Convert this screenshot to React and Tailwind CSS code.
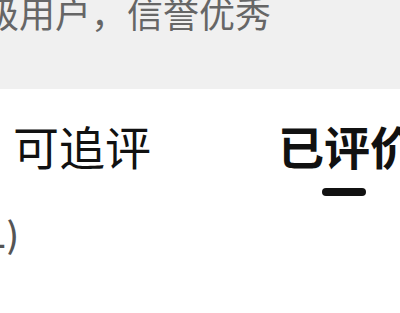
import React from 'react'

const tabs = [
  { label: '可追评', active: false },
  { label: '已评价', active: true },
]

export default function App() {
  return (
    <div
      className="w-[400px] h-[313px] overflow-hidden bg-white"
      style={{ fontFamily: '"Noto Sans CJK SC", "Noto Sans", sans-serif' }}
    >
      {/* seller credit banner */}
      <div className="h-[89px] bg-[#f0f0f0] overflow-hidden">
        <p className="-ml-[17px] -mt-[6px] whitespace-nowrap text-[36px] leading-[36px] text-[#666666]">
          级用户，信誉优秀
        </p>
      </div>

      {/* tabs */}
      <div className="flex items-start gap-[127px] pl-[13px] pt-[33px] whitespace-nowrap">
        {tabs.map((tab) => (
          <div key={tab.label} className="flex flex-col items-start">
            <span
              className={
                tab.active
                  ? 'text-[46px] leading-[46px] font-bold text-[#111111]'
                  : 'text-[46px] leading-[46px] text-[#111111]'
              }
            >
              {tab.label}
            </span>
            {tab.active && (
              <span className="mt-[20px] ml-[44px] h-[8px] w-[44px] rounded-full bg-[#111111]" />
            )}
          </div>
        ))}
      </div>

      {/* count line, clipped at the left edge */}
      <div className="mt-[19px] -ml-[26px] whitespace-nowrap text-[35px] leading-[35px] font-medium text-[#555555]">
        (1)
      </div>
    </div>
  )
}
